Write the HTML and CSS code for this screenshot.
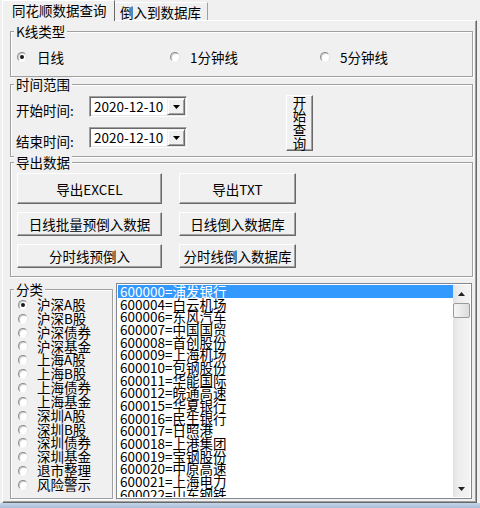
FILE: index.html
```html
<!DOCTYPE html>
<html lang="zh-CN">
<head>
<meta charset="utf-8">
<title>同花顺数据查询</title>
<link rel="stylesheet" href="styles.css">
</head>
<body>
<div class="window">
  <div class="tabstrip">
    <div class="tab tab-active">同花顺数据查询</div>
    <div class="tab tab-second">倒入到数据库</div>
  </div>
  <div class="page">
    <div class="group group-ktype">
      <div class="legend">K线类型</div>
      <div class="ktype-row">
        <div class="radio ktype-first"><span class="dot dot-checked"></span>日线</div>
        <div class="radio ktype-second"><span class="dot"></span>1分钟线</div>
        <div class="radio"><span class="dot"></span>5分钟线</div>
      </div>
    </div>
    <div class="group group-time">
      <div class="legend">时间范围</div>
      <div class="time-row">
        <div class="time-fields">
          <div class="field">
            <span class="field-label">开始时间:</span>
            <div class="combo">
              <span class="combo-text">2020-12-10</span>
              <span class="combo-btn"><svg class="arrow" width="7" height="4" viewBox="0 0 7 4"><polygon points="0,0 7,0 3.5,4" fill="#000"/></svg></span>
            </div>
          </div>
          <div class="field field-second">
            <span class="field-label">结束时间:</span>
            <div class="combo">
              <span class="combo-text">2020-12-10</span>
              <span class="combo-btn"><svg class="arrow" width="7" height="4" viewBox="0 0 7 4"><polygon points="0,0 7,0 3.5,4" fill="#000"/></svg></span>
            </div>
          </div>
        </div>
        <div class="btn btn-query"><span class="vtext">开始查询</span></div>
      </div>
    </div>
    <div class="group group-export">
      <div class="legend">导出数据</div>
      <div class="export-grid">
        <div class="btn">导出EXCEL</div>
        <div class="btn">导出TXT</div>
        <div class="btn">日线批量预倒入数据</div>
        <div class="btn">日线倒入数据库</div>
        <div class="btn">分时线预倒入</div>
        <div class="btn">分时线倒入数据库</div>
      </div>
    </div>
    <div class="bottom-row">
      <div class="group group-cat">
        <div class="legend">分类</div>
        <div class="cat-list">
          <div class="radio cat-item"><span class="dot dot-checked"></span>沪深A股</div>
          <div class="radio cat-item"><span class="dot"></span>沪深B股</div>
          <div class="radio cat-item"><span class="dot"></span>沪深债券</div>
          <div class="radio cat-item"><span class="dot"></span>沪深基金</div>
          <div class="radio cat-item"><span class="dot"></span>上海A股</div>
          <div class="radio cat-item"><span class="dot"></span>上海B股</div>
          <div class="radio cat-item"><span class="dot"></span>上海债券</div>
          <div class="radio cat-item"><span class="dot"></span>上海基金</div>
          <div class="radio cat-item"><span class="dot"></span>深圳A股</div>
          <div class="radio cat-item"><span class="dot"></span>深圳B股</div>
          <div class="radio cat-item"><span class="dot"></span>深圳债券</div>
          <div class="radio cat-item"><span class="dot"></span>深圳基金</div>
          <div class="radio cat-item"><span class="dot"></span>退市整理</div>
          <div class="radio cat-item"><span class="dot"></span>风险警示</div>
        </div>
      </div>
      <div class="listbox">
        <div class="list-items">
          <div class="list-item list-item-selected">600000=浦发银行</div>
          <div class="list-item">600004=白云机场</div>
          <div class="list-item">600006=东风汽车</div>
          <div class="list-item">600007=中国国贸</div>
          <div class="list-item">600008=首创股份</div>
          <div class="list-item">600009=上海机场</div>
          <div class="list-item">600010=包钢股份</div>
          <div class="list-item">600011=华能国际</div>
          <div class="list-item">600012=皖通高速</div>
          <div class="list-item">600015=华夏银行</div>
          <div class="list-item">600016=民生银行</div>
          <div class="list-item">600017=日照港</div>
          <div class="list-item">600018=上港集团</div>
          <div class="list-item">600019=宝钢股份</div>
          <div class="list-item">600020=中原高速</div>
          <div class="list-item">600021=上海电力</div>
          <div class="list-item">600022=山东钢铁</div>
        </div>
        <div class="scrollbar">
          <div class="sb-btn"><svg class="arrow" width="7" height="4" viewBox="0 0 7 4"><polygon points="0,4 7,4 3.5,0" fill="#222"/></svg></div>
          <div class="sb-thumb"></div>
          <div class="sb-track"></div>
          <div class="sb-btn"><svg class="arrow" width="7" height="4" viewBox="0 0 7 4"><polygon points="0,0 7,0 3.5,4" fill="#222"/></svg></div>
        </div>
      </div>
    </div>
  </div>
  <div class="frame-bottom"></div>
</div>
</body>
</html>
```

FILE: styles.css
```css
* { box-sizing: border-box; }
html, body { margin: 0; padding: 0; }
body {
  width: 480px;
  height: 508px;
  overflow: hidden;
  background: #f0f0f0;
  font-family: "Noto Sans CJK SC", "Liberation Sans", sans-serif;
  font-size: 13.5px;
  line-height: 14px;
  color: #000;
}
.window {
  display: flex;
  flex-direction: column;
  height: 508px;
}

/* tabs */
.tabstrip {
  flex: none;
  display: flex;
  align-items: flex-end;
  height: 20px;
  padding-left: 2px;
}
.tab {
  height: 18px;
  width: 93px;
  padding: 2px 0 0 5px;
  border-top: 1px solid #fff;
  border-right: 1px solid #a0a0a0;
  line-height: 14px;
  white-space: nowrap;
  background: #f0f0f0;
}
.tab-active {
  position: relative;
  z-index: 1;
  width: 113px;
  height: 21px;
  margin-bottom: -1px;
  padding: 2px 0 0 9px;
  border-left: 1px solid #fff;
  border-right: 1px solid #696969;
}

/* page */
.page {
  flex: 1;
  margin: 0 3px 0 2px;
  padding: 10px 3px 0 7px;
  border-top: 1px solid #fff;
  border-left: 1px solid #fff;
  border-right: 1px solid #696969;
  border-bottom: 1px solid #696969;
  box-shadow: inset -1px -1px 0 #a0a0a0;
}
.frame-bottom {
  flex: none;
  height: 5px;
  background: linear-gradient(#c4d5e8, #a7bdd8);
}

/* group boxes */
.group {
  border: 1px solid #a0a0a0;
  box-shadow: inset 1px 1px 0 #fff, 1px 1px 0 #fff;
}
.legend {
  width: fit-content;
  height: 14px;
  margin: -8px 0 0 3px;
  padding: 0 2px;
  background: #f0f0f0;
  line-height: 14px;
  white-space: nowrap;
}
.group-ktype { height: 46px; }
.group-time { height: 73px; margin-top: 7px; }
.group-export { height: 115px; margin-top: 5px; }

/* radios */
.radio {
  display: flex;
  align-items: center;
  white-space: nowrap;
}
.dot {
  position: relative;
  flex: none;
  width: 10px;
  height: 10px;
  border-radius: 50%;
  border: 1px solid;
  border-color: #8c8c8c #e2e2e2 #f6f6f6 #8c8c8c;
  background: #fff;
  box-shadow: inset 1px 1px 0 #c9c9c9;
}
.dot-checked::after {
  content: "";
  position: absolute;
  left: 2px;
  top: 2px;
  width: 4px;
  height: 4px;
  border-radius: 50%;
  background: #1a1a1a;
}
.ktype-row {
  display: flex;
  margin-top: 11px;
  padding-left: 6px;
}
.ktype-row .radio { height: 16px; line-height: 16px; }
.ktype-row .dot { margin-right: 10px; }
.ktype-first { width: 153px; }
.ktype-second { width: 150px; }

/* time range */
.time-row {
  display: flex;
  align-items: flex-start;
  margin-top: 4px;
}
.time-fields { padding-top: 1px; }
.field {
  display: flex;
  align-items: flex-start;
  height: 21px;
}
.field-second { margin-top: 10px; }
.field-label {
  width: 73px;
  margin: 7px 0 0 5px;
  line-height: 14px;
  white-space: nowrap;
}
.combo {
  display: flex;
  width: 98px;
  height: 21px;
  padding: 1px;
  background: #fff;
  border: 1px solid;
  border-color: #a0a0a0 #fff #fff #a0a0a0;
  box-shadow: inset 1px 1px 0 #696969, inset -1px -1px 0 #e3e3e3;
}
.combo-text {
  flex: 1;
  padding-left: 3px;
  line-height: 16px;
}
.combo-btn {
  display: flex;
  align-items: center;
  justify-content: center;
  width: 18px;
  height: 17px;
  background: #f0f0f0;
  border: 1px solid;
  border-color: #f0f0f0 #696969 #696969 #f0f0f0;
  box-shadow: inset 1px 1px 0 #fff, inset -1px -1px 0 #a0a0a0;
}
.arrow { display: block; }

/* buttons */
.btn {
  display: flex;
  align-items: center;
  justify-content: center;
  background: #f0f0f0;
  border: 1px solid;
  border-color: #fff #696969 #696969 #fff;
  box-shadow: inset -1px -1px 0 #a0a0a0;
  white-space: nowrap;
  line-height: 14px;
}
.btn-query {
  flex: none;
  width: 27px;
  height: 56px;
  margin-left: 99px;
  white-space: normal;
}
.vtext {
  width: 14px;
  line-height: 13.7px;
  text-align: center;
}
.export-grid {
  display: grid;
  grid-template-columns: 145px 117px;
  grid-template-rows: 31px 24px 24px;
  column-gap: 17px;
  row-gap: 8px;
  margin-top: 4px;
  padding-left: 6px;
}

/* bottom */
.bottom-row {
  display: flex;
  align-items: flex-start;
  margin-top: 6px;
}
.group-cat {
  flex: none;
  width: 103px;
  height: 210px;
  margin-top: 6px;
}
.cat-list {
  margin-top: 2px;
  padding-left: 7px;
}
.cat-item {
  height: 13.85px;
  line-height: 13.85px;
}
.cat-item .dot { margin-right: 9px; }

.listbox {
  flex: none;
  display: flex;
  width: 356px;
  height: 216px;
  margin-left: 3px;
  padding: 1px;
  background: #fff;
  border: 1px solid #828790;
}
.list-items {
  flex: 1;
  overflow: hidden;
}
.list-item {
  height: 12.67px;
  line-height: 12.67px;
  padding-left: 2px;
  white-space: nowrap;
}
.list-item-selected {
  background: #3399ff;
  color: #fff;
}
.scrollbar {
  flex: none;
  display: flex;
  flex-direction: column;
  width: 17px;
  background: linear-gradient(to right, #e2e2e2, #eeeeee 35%, #f3f3f3);
}
.sb-btn {
  flex: none;
  display: flex;
  align-items: center;
  justify-content: center;
  height: 17px;
}
.sb-thumb {
  flex: none;
  height: 15px;
  margin: 1px 0 0 0;
  border: 1px solid #9b9b9b;
  border-radius: 2px;
  background: linear-gradient(to right, #f6f6f6, #e9e9e9 50%, #dcdcdc);
}
.sb-track { flex: 1; }
```
